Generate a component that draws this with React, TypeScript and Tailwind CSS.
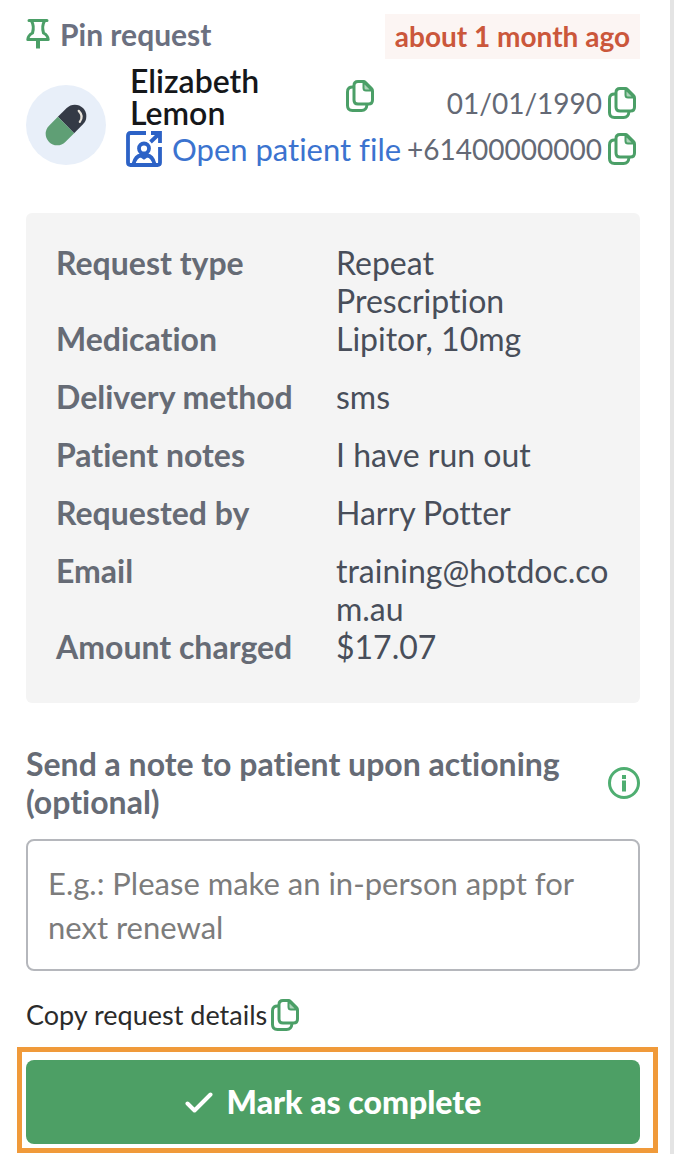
import React, { useState } from 'react'

interface Detail {
  label: string
  value: string
}

const details: Detail[] = [
  { label: 'Request type', value: 'Repeat Prescription' },
  { label: 'Medication', value: 'Lipitor, 10mg' },
  { label: 'Delivery method', value: 'sms' },
  { label: 'Patient notes', value: 'I have run out' },
  { label: 'Requested by', value: 'Harry Potter' },
  { label: 'Email', value: 'training@hotdoc.com.au' },
  { label: 'Amount charged', value: '$17.07' }
]

const PinIcon: React.FC = () => (
  <svg className="h-8 w-6 shrink-0" viewBox="0 0 24 32" fill="none" stroke="currentColor" strokeWidth="3" strokeLinejoin="round" strokeLinecap="round">
    <path d="M3 2.500h18M5.500 3Q8.500 8 6.500 15Q2 17.500 1.800 21.500H22.200Q22 17.500 17.500 15Q15.500 8 18.500 3" />
    <path d="M12 22v8.500" strokeWidth="4" strokeLinecap="butt" />
  </svg>
)

const CopyIcon: React.FC = () => (
  <svg className="h-8 w-7 shrink-0" viewBox="0 0 28 32" fill="none" stroke="currentColor" strokeWidth="3" strokeLinejoin="round" strokeLinecap="round">
    <path d="M12 1.500H17.500Q18.500 1.500 19.500 2.500L25.500 8.500Q26.500 9.500 26.500 11V20Q26.500 24 22.500 24H12Q8 24 8 20V5.500Q8 1.500 12 1.500Z" />
    <path d="M17.500 2V8Q17.500 10.500 20 10.500H26Z" fill="currentColor" fillOpacity="0.45" strokeWidth="2" />
    <path d="M7.500 7Q1.500 6.500 1.500 12V25.500Q1.500 30.500 6.500 30.500H15.500Q20.500 30.500 21 24.500" />
  </svg>
)

const PillIcon: React.FC = () => (
  <svg className="h-11 w-11" viewBox="0 0 44 44">
    <g transform="rotate(45 22 22)">
      <path d="M10.500 22V9.500a11.500 11.500 0 0 1 23 0V22z" fill="#343a46" />
      <path d="M10.500 22h23v12.500a11.500 11.500 0 0 1-23 0z" fill="#5f9f75" />
      <path d="M21 3q7.500 0 8.500 7" fill="none" stroke="#e9e4dc" strokeWidth="2.200" strokeLinecap="round" />
    </g>
  </svg>
)

const PatientFileIcon: React.FC = () => (
  <svg className="h-9 w-9 shrink-0" viewBox="0 0 36 36" fill="none" stroke="currentColor" strokeWidth="3.800">
    <path d="M20 2H4.500Q2 2 2 4.500V31.500Q2 34 4.500 34H31.500Q34 34 34 31.500V16" />
    <path d="M25 2H34V12M34 2L24.500 11" />
    <circle cx="18" cy="17.500" r="5" />
    <path d="M7.500 33Q9.500 25 15 24.500L18 26.500L21 24.500Q26.500 25 28.500 33" />
  </svg>
)

const CheckIcon: React.FC = () => (
  <svg className="h-7 w-7 shrink-0" viewBox="0 0 28 28" fill="none" stroke="currentColor" strokeWidth="4" strokeLinecap="round" strokeLinejoin="round">
    <path d="M2.500 15.500L9.500 22.500L25.500 6.500" />
  </svg>
)

const CopyButton: React.FC<{ label: string; text: string }> = ({ label, text }) => (
  <button
    type="button"
    aria-label={label}
    onClick={() => navigator.clipboard?.writeText(text)}
    className="text-[#4b9f67]"
  >
    <CopyIcon />
  </button>
)

const PatientSummary: React.FC = () => (
  <section className="mt-1.5 flex items-end">
    <div className="mb-0.5 flex h-20 w-20 shrink-0 items-center justify-center rounded-full bg-[#e8eff9]">
      <PillIcon />
    </div>
    <div className="ml-5 flex min-w-0 flex-1 flex-col gap-0.5">
      <div className="flex items-center">
        <h2 className="w-52 pl-1 text-[32px] leading-8 font-semibold text-[#15171a]">
          Elizabeth Lemon
        </h2>
        <div className="mt-1 ml-3">
          <CopyButton label="Copy name" text="Elizabeth Lemon" />
        </div>
        <div className="mt-3 ml-auto flex items-center gap-1.5 pr-1 text-[28px] leading-8 text-[#646975]">
          01/01/1990
          <CopyButton label="Copy date of birth" text="01/01/1990" />
        </div>
      </div>
      <div className="flex items-center justify-between pr-1">
        <a href="#patient-file" className="flex items-center gap-2.5 text-[31px] leading-9 whitespace-nowrap text-[#3b73cf]">
          <span className="text-[#2c62c6]">
            <PatientFileIcon />
          </span>
          Open patient file
        </a>
        <div className="flex items-center gap-1.5 text-[28px] leading-9 text-[#646975]">
          +61400000000
          <CopyButton label="Copy phone number" text="+61400000000" />
        </div>
      </div>
    </div>
  </section>
)

const App: React.FC = () => {
  const [note, setNote] = useState('')

  return (
    <main className="min-h-screen border-r-4 border-[#e4e4e4] bg-white pt-3.5 pr-[30px] pl-[26px] font-['Lato',sans-serif] [font-variant-ligatures:none]">
      <header className="flex items-start justify-between">
        <button type="button" className="mt-0.5 flex items-center gap-2.5 text-[30px] leading-9 font-bold text-[#6b7080]">
          <span className="text-[#4b9f67]">
            <PinIcon />
          </span>
          Pin request
        </button>
        <span className="bg-[#fcf5f3] px-2.5 text-[28px] leading-[45px] font-bold text-[#cb573b]">
          about 1 month ago
        </span>
      </header>

      <PatientSummary />

      <dl className="mt-[46px] rounded-md bg-[#f4f4f4] px-[30px] pt-[31px] pb-[17px] text-[32px] leading-[38px]">
        {details.map((detail) => (
          <div key={detail.label} className="flex min-h-[58px]">
            <dt className="w-[280px] shrink-0 font-bold text-[#666b75]">{detail.label}</dt>
            <dd className="min-w-0 flex-1 wrap-anywhere text-[#484e5a]">{detail.value}</dd>
          </div>
        ))}
      </dl>

      <div className="mt-[42px] flex items-center justify-between">
        <label htmlFor="note" className="text-[32px] leading-[38px] font-bold text-[#666b75]">
          Send a note to patient upon actioning (optional)
        </label>
        <button type="button" aria-label="About patient notes" className="shrink-0 text-[#4fae71]">
          <svg className="h-8 w-8" viewBox="0 0 32 32" fill="none" stroke="currentColor" strokeWidth="3">
            <circle cx="16" cy="16" r="14.500" />
            <path d="M16 8v4M16 13.500v11" strokeWidth="4" />
          </svg>
        </button>
      </div>
      <textarea
        id="note"
        rows={2}
        value={note}
        onChange={(e) => setNote(e.target.value)}
        placeholder="E.g.: Please make an in-person appt for next renewal"
        className="mt-[18px] block w-full resize-none rounded-lg border-2 border-[#b5b7bc] px-5 py-5 text-[31px] leading-11 text-[#484e5a] placeholder:text-[#7c7c7c]"
      />

      <div className="mt-[26px] flex items-center gap-1 text-[27px] leading-9 text-[#2b2b2b]">
        Copy request details
        <CopyButton
          label="Copy request details"
          text={details.map((d) => `${d.label}: ${d.value}`).join('\n')}
        />
      </div>

      <div className="mt-3.5 -mr-[18px] -ml-[9px] border-[5px] border-[#f09a3a] pt-2 pr-[13px] pb-1 pl-1">
        <button type="button" className="flex h-[84px] w-full items-center justify-center gap-3.5 rounded-lg bg-[#4d9f65] text-[32px] font-black text-white">
          <CheckIcon />
          Mark as complete
        </button>
      </div>
    </main>
  )
}

export default App
